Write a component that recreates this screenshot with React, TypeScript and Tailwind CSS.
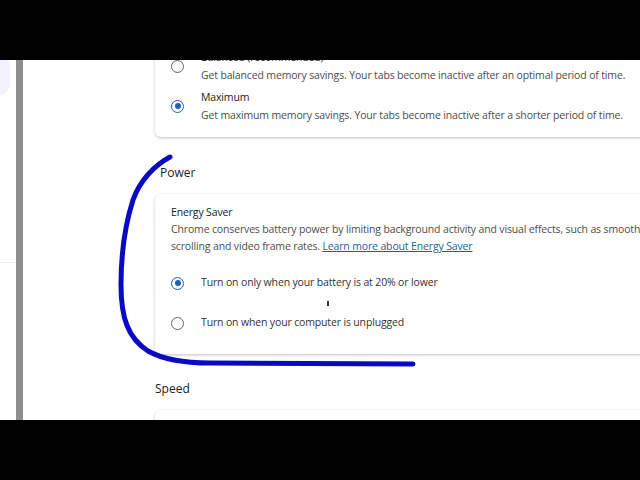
import React from 'react';

const font = { fontFamily: '"Open Sans", "Noto Sans", sans-serif' };

function Radio({ checked }: { checked?: boolean }) {
  return checked ? (
    <span className="flex h-[13px] w-[13px] shrink-0 items-center justify-center rounded-full border-[1.5px] border-[#1f5fb5]">
      <span className="h-[6px] w-[6px] rounded-full bg-[#1f5fb5]" />
    </span>
  ) : (
    <span className="h-[13px] w-[13px] shrink-0 rounded-full border-[1.5px] border-[#5f6368]" />
  );
}

function Option({ title, desc, checked }: { title: string; desc: string; checked?: boolean }) {
  return (
    <div className="flex h-[40px] items-center">
      <Radio checked={checked} />
      <div className="ml-[17px] flex flex-col">
        <span className="text-[10.5px] leading-[18px] tracking-[-0.15px] text-[#202124]">{title}</span>
        <span className="text-[10.5px] leading-[18px] tracking-[-0.15px] text-[#4d4d4d]">{desc}</span>
      </div>
    </div>
  );
}

export default function App() {
  return (
    <div className="relative flex h-[480px] w-[640px] flex-col overflow-hidden bg-white" style={font}>
      <div className="h-[60px] shrink-0 bg-black" />

      <div className="flex h-[360px] shrink-0 overflow-hidden">
        {/* sidebar edge */}
        <div className="relative w-[16px] shrink-0">
          <div className="absolute left-[-16px] top-[-6px] h-[42px] w-[26px] rounded-full bg-[#f1f3fc]" />
          <div className="absolute top-[202px] h-px w-full bg-[#ececec]" />
        </div>
        <div className="w-[7px] shrink-0 bg-[#8e8e8e]" />

        {/* main */}
        <div className="flex w-[560px] shrink-0 flex-col pl-[132px]">
          <div className="mt-[-24px] w-[560px] shrink-0 rounded-[6px] bg-white pb-[11px] pl-[16px] pt-[10px] shadow-[0_1px_3px_rgba(0,0,0,0.25)]">
            <Option title="Balanced (recommended)" desc="Get balanced memory savings. Your tabs become inactive after an optimal period of time." />
            <Option checked title="Maximum" desc="Get maximum memory savings. Your tabs become inactive after a shorter period of time." />
          </div>

          <div className="mt-[27px] shrink-0 pl-[5px] text-[12px] leading-[18px] text-[#202124]">Power</div>

          <div className="relative mt-[12px] h-[160px] w-[560px] shrink-0 rounded-[6px] bg-white pl-[16px] pt-[10px] shadow-[0_1px_3px_rgba(0,0,0,0.25)]">
            <div className="text-[10.5px] leading-[17px] tracking-[-0.15px] text-[#202124]">Energy Saver</div>
            <div className="whitespace-nowrap text-[10.5px] leading-[17px] tracking-[-0.15px] text-[#4d4d4d]">
              Chrome conserves battery power by limiting background activity and visual effects, such as smooth
              <br />
              scrolling and video frame rates.{' '}
              <span className="text-[#1d5f96] underline">Learn more about Energy Saver</span>
            </div>
            <div className="mt-[8px] flex h-[40px] items-center">
              <Radio checked />
              <span className="ml-[17px] text-[10.5px] tracking-[-0.15px] text-[#333333]">Turn on only when your battery is at 20% or lower</span>
            </div>
            <div className="flex h-[40px] items-center">
              <Radio />
              <span className="ml-[17px] text-[10.5px] tracking-[-0.15px] text-[#333333]">Turn on when your computer is unplugged</span>
            </div>
            <div className="absolute left-[172px] top-[107px] h-[5px] w-[2px] bg-[#333]" />
          </div>

          <div className="mt-[26px] shrink-0 text-[12px] leading-[18px] text-[#202124]">Speed</div>
          <div className="mt-[12px] h-[60px] w-[560px] shrink-0 rounded-[6px] bg-white shadow-[0_1px_3px_rgba(0,0,0,0.25)]" />
        </div>
      </div>

      <div className="h-[60px] shrink-0 bg-black" />

      {/* pen annotation */}
      <svg className="pointer-events-none absolute left-0 top-0" width="640" height="480" viewBox="0 0 640 480">
        <path
          d="M170 157 C 155 165, 140 180, 133 200 C 125 225, 121 255, 121 285 C 121 318, 128 338, 148 351 C 164 360, 185 363, 210 363 L 413 364"
          fill="none"
          stroke="#0a0ac4"
          strokeWidth="5"
          strokeLinecap="round"
          strokeLinejoin="round"
        />
      </svg>
    </div>
  );
}
